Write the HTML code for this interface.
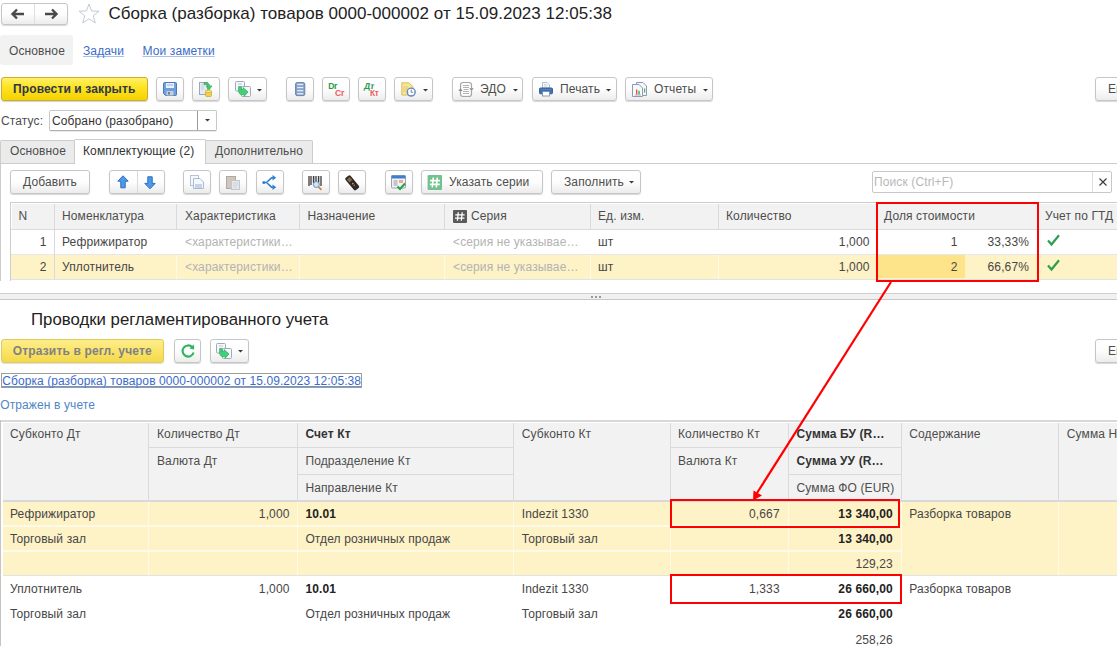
<!DOCTYPE html>
<html><head><meta charset="utf-8"><style>
*{box-sizing:border-box}
html,body{margin:0;padding:0;width:1117px;height:655px;overflow:hidden;background:#fff;position:relative}
body{font-family:"Liberation Sans",sans-serif;font-size:12px;color:#4d4d4d}
.a{position:absolute}
svg.a{overflow:visible}
.t{position:absolute;white-space:nowrap;letter-spacing:.12px}
.btn{position:absolute;border:1px solid #c6c6c6;border-radius:3px;background:linear-gradient(#fff 0%,#fdfdfd 50%,#ececec 100%);box-shadow:0 1px 1px rgba(0,0,0,.16)}
.ybtn2{position:absolute;border:1px solid #e2c95c;border-radius:3px;background:linear-gradient(#fdee8c 0%,#fbe56a 45%,#f4d94c 100%);box-shadow:0 1px 1px rgba(0,0,0,.12)}
.ybtn{position:absolute;border:1px solid #cfab2c;border-radius:3px;background:linear-gradient(#fff06a 0%,#fde424 40%,#f5d300 100%);box-shadow:0 1px 1px rgba(0,0,0,.18)}
</style></head><body>
<div class="btn" style="left:1px;top:3px;width:67px;height:22px;"></div>
<div class="a" style="left:34px;top:4px;width:1px;height:20px;background:#dedede"></div>
<svg class="a" style="left:11px;top:8px" width="14" height="12" viewBox="0 0 14 12"><path d="M6 1.5 L1.5 6 L6 10.5 M1.5 6 H13" stroke="#4a4a4a" stroke-width="2.4" fill="none"/></svg>
<svg class="a" style="left:44px;top:8px" width="14" height="12" viewBox="0 0 14 12"><path d="M8 1.5 L12.5 6 L8 10.5 M12.5 6 H1" stroke="#4a4a4a" stroke-width="2.4" fill="none"/></svg>
<svg class="a" style="left:78px;top:3px" width="22" height="21" viewBox="0 0 22 21"><path d="M11 1 L13.6 8 L21 8.2 L15.2 12.8 L17.3 20 L11 15.8 L4.7 20 L6.8 12.8 L1 8.2 L8.4 8 Z" fill="none" stroke="#c3cad6" stroke-width="1"/></svg>
<div class="t" style="top:3.68px;font-size:17px;line-height:20px;height:20px;color:#222;left:108.50px;letter-spacing:.03px">Сборка (разборка) товаров 0000-000002 от 15.09.2023 12:05:38</div>
<div class="a" style="left:0px;top:35px;width:73px;height:30px;background:#f2f2f2;border-radius:3px"></div>
<div class="t" style="top:44.03px;font-size:12px;line-height:14px;height:14px;left:9.00px;">Основное</div>
<div class="t" style="top:44.03px;font-size:12px;line-height:14px;height:14px;color:#3b6cc8;left:83.00px;text-decoration:underline;text-decoration-color:#a9c0e8;text-underline-offset:1px;text-decoration-skip-ink:none">Задачи</div>
<div class="t" style="top:44.03px;font-size:12px;line-height:14px;height:14px;color:#3b6cc8;left:142.50px;text-decoration:underline;text-decoration-color:#a9c0e8;text-underline-offset:1px;text-decoration-skip-ink:none">Мои заметки</div>
<div class="ybtn" style="left:1px;top:77px;width:147px;height:24px;"></div>
<div class="t" style="top:81.93px;font-size:12px;line-height:14px;height:14px;color:#30374a;font-weight:bold;left:13.00px;">Провести и закрыть</div>
<div class="btn" style="left:156px;top:77px;width:28px;height:24px;"></div>
<div class="btn" style="left:192px;top:77px;width:28px;height:24px;"></div>
<div class="btn" style="left:228px;top:77px;width:39px;height:24px;"></div>
<div class="btn" style="left:286px;top:77px;width:28px;height:24px;"></div>
<div class="btn" style="left:322px;top:77px;width:28px;height:24px;"></div>
<div class="btn" style="left:358px;top:77px;width:28px;height:24px;"></div>
<div class="btn" style="left:394px;top:77px;width:39px;height:24px;"></div>
<div class="btn" style="left:452px;top:77px;width:71px;height:24px;"></div>
<div class="btn" style="left:532px;top:77px;width:85px;height:24px;"></div>
<div class="btn" style="left:625px;top:77px;width:88px;height:24px;"></div>
<div class="btn" style="left:1095px;top:77px;width:45px;height:24px;"></div>
<div class="t" style="top:81.93px;font-size:12px;line-height:14px;height:14px;left:480.00px;">ЭДО</div>
<div class="t" style="top:81.93px;font-size:12px;line-height:14px;height:14px;left:560.00px;">Печать</div>
<div class="t" style="top:81.93px;font-size:12px;line-height:14px;height:14px;left:654.00px;">Отчеты</div>
<div class="t" style="top:81.93px;font-size:12px;line-height:14px;height:14px;left:1108.00px;">En</div>
<svg class="a" style="left:256.5px;top:88.5px" width="5" height="3" viewBox="0 0 5 3"><path d="M0 0 H5 L2.5 2.6Z" fill="#3a3a3a"/></svg>
<svg class="a" style="left:163px;top:82px" width="14" height="14" viewBox="0 0 14 14"><path d="M0.5 1.5 Q0.5 0.5 1.5 0.5 H12.5 Q13.5 0.5 13.5 1.5 V12.5 Q13.5 13.5 12.5 13.5 H2.5 L0.5 11.5 Z" fill="#6f9fdc" stroke="#4b78b8"/><rect x="3" y="1" width="8" height="5" fill="#e9f1fb"/><path d="M4 3 H10" stroke="#8fb2e0" stroke-width="1"/><rect x="3.5" y="9" width="7" height="4.5" fill="#c9ced6"/><rect x="5" y="10" width="2" height="2.5" fill="#6f7f96"/></svg>
<svg class="a" style="left:198px;top:81px" width="16" height="16" viewBox="0 0 16 16"><rect x="1.5" y="1.5" width="8" height="12" fill="#e6ebf2" stroke="#9aa8bc"/><path d="M3 4 H7 M3 6 H6 M3 8 H6" stroke="#b9c4d4" stroke-width=".8"/><path d="M6 1.5 Q11 1 12 5 L14 5 L11 9 L8 5 L10 5 Q9.5 3 6 3.5 Z" fill="#43c870" stroke="#2aa656" stroke-width=".6"/><rect x="7.5" y="10" width="6" height="5.5" rx="1" fill="#f0cf4a" stroke="#c9a520" stroke-width=".7"/><ellipse cx="10.5" cy="10.3" rx="3" ry="1.2" fill="#fbe784" stroke="#c9a520" stroke-width=".6"/></svg>
<svg class="a" style="left:234px;top:81px" width="17" height="17" viewBox="0 0 17 17"><rect x="1.5" y="0.5" width="9" height="9.5" rx="1" fill="#f5f7fa" stroke="#9eabbd"/><rect x="7.5" y="5.5" width="9" height="10" rx="1" fill="#f5f7fa" stroke="#9eabbd"/><path d="M4 3 H8" stroke="#b8c4d6" stroke-width="1"/><path d="M4.6 5.6 H7.2 V9 L9.3 8.3 L9 6.6 L14 11 L10.2 15.2 L10 13 L7.4 14 Q4.6 12.4 4.6 10.2 Z" fill="#42d27a" stroke="#28a655" stroke-width=".7" stroke-linejoin="round"/></svg>
<svg class="a" style="left:295px;top:82px" width="11" height="14" viewBox="0 0 11 14"><rect x="0.6" y="0.6" width="9.2" height="13" rx="1.6" fill="#86a2c8" stroke="#6883ab" stroke-width="1"/><rect x="2.2" y="1.8" width="6" height="1.3" fill="#e6eef9"/><rect x="2.2" y="4.9" width="6" height="1.3" fill="#e6eef9"/><rect x="2.2" y="8.0" width="6" height="1.3" fill="#e6eef9"/><rect x="2.2" y="11.1" width="6" height="1.3" fill="#e6eef9"/></svg>
<svg class="a" style="left:326px;top:82px" width="20" height="16" viewBox="0 0 20 16"><text x="2.2" y="7.3" font-family="Liberation Sans" font-weight="bold" font-size="8.6" fill="#2a9a48" letter-spacing="-.3">Dr</text><text x="9" y="13.7" font-family="Liberation Sans" font-weight="bold" font-size="8.6" fill="#f05a5a" letter-spacing="-.3">Cr</text></svg>
<svg class="a" style="left:363px;top:82px" width="20" height="16" viewBox="0 0 20 16"><text x="1.8" y="7.3" font-family="Liberation Sans" font-weight="bold" font-size="8.6" fill="#2a9a48" transform="skewX(-8)" letter-spacing="-.2">Дт</text><text x="7" y="13.7" font-family="Liberation Sans" font-weight="bold" font-size="8.2" fill="#f05a5a" letter-spacing="-.2">Кт</text></svg>
<svg class="a" style="left:400px;top:82px" width="18" height="16" viewBox="0 0 18 16"><path d="M1.8 0.8 H9 L12.8 4.6 V13 H1.8 Z" fill="#f9e596" stroke="#d8bd5e"/><path d="M3 5 H8 M3 7 H9 M3 9 H6" stroke="#d9c271" stroke-width=".8"/><circle cx="11.2" cy="10.1" r="4" fill="#fff" stroke="#5b8fd0" stroke-width="1.4"/><circle cx="11.2" cy="6.9" r=".6" fill="#e5703e"/><circle cx="14.4" cy="10.1" r=".6" fill="#e5703e"/><circle cx="11.2" cy="13.3" r=".6" fill="#e5563e"/><circle cx="8" cy="10.1" r=".6" fill="#e5703e"/><path d="M11.2 8 V10.3 H13" stroke="#4f7fc4" stroke-width=".9" fill="none"/></svg>
<svg class="a" style="left:422.5px;top:88.5px" width="5" height="3" viewBox="0 0 5 3"><path d="M0 0 H5 L2.5 2.6Z" fill="#3a3a3a"/></svg>
<svg class="a" style="left:458px;top:82px" width="16" height="15" viewBox="0 0 16 15"><rect x="4" y="2" width="8" height="11" fill="#fff"/><path d="M5 3.5 H11 M5 5.5 H11 M5.5 7.5 H10.5 M5 9.5 H11 M5 11.5 H11" stroke="#b3b3b3" stroke-width="1"/><path d="M2.5 7.5 V3 Q2.5 0.5 5 0.5 H11 Q13.5 0.5 13.5 3 V6.5" stroke="#a6a6a6" stroke-width="1.2" fill="none"/><path d="M13.5 9 V12 Q13.5 14.5 11 14.5 H5 Q2.5 14.5 2.5 12 V8.5" stroke="#a6a6a6" stroke-width="1.2" fill="none"/><path d="M0.3 9 L2.5 6.2 L4.7 9Z" fill="#8a8a8a"/><path d="M11.3 6.3 L13.5 9.1 L15.7 6.3Z" fill="#8a8a8a"/></svg>
<svg class="a" style="left:512.5px;top:88.5px" width="5" height="3" viewBox="0 0 5 3"><path d="M0 0 H5 L2.5 2.6Z" fill="#3a3a3a"/></svg>
<svg class="a" style="left:538px;top:81px" width="16" height="16" viewBox="0 0 16 16"><path d="M4.5 1.5 H9 L11.5 4 V7 H4.5 Z" fill="#fafbfc" stroke="#a9b6c6" stroke-width=".9"/><path d="M6 3.5 H8.5 M6 5 H9.5" stroke="#b4c0d0" stroke-width=".7"/><rect x="1.5" y="7" width="13" height="5.8" rx="1" fill="#3f6fb0" stroke="#2d5a97" stroke-width=".9"/><path d="M2.5 8.3 H13.5" stroke="#5b88c6" stroke-width=".8"/><rect x="4.5" y="10.5" width="7" height="4.5" fill="#fff" stroke="#6f8aa8" stroke-width=".8"/></svg>
<svg class="a" style="left:605.5px;top:88.5px" width="5" height="3" viewBox="0 0 5 3"><path d="M0 0 H5 L2.5 2.6Z" fill="#3a3a3a"/></svg>
<svg class="a" style="left:631px;top:81px" width="17" height="17" viewBox="0 0 17 17"><path d="M5.5 1.5 H12 L15.5 5 V14.5 H5.5 Z" fill="#f4f6f9" stroke="#8d9bb5"/><path d="M1.5 3.5 H8 L11.5 7 V15.5 H1.5 Z" fill="#f7f8fa" stroke="#8d9bb5"/><rect x="5" y="8.5" width="1.4" height="5" fill="#ef4f4f"/><rect x="7.3" y="9.8" width="1.5" height="3.7" fill="#3db85e"/><path d="M3.8 14 H10" stroke="#9a9a9a" stroke-width=".8"/><rect x="13" y="7.5" width="1.2" height="4" fill="#3db85e"/></svg>
<svg class="a" style="left:702.5px;top:88.5px" width="5" height="3" viewBox="0 0 5 3"><path d="M0 0 H5 L2.5 2.6Z" fill="#3a3a3a"/></svg>
<div class="t" style="top:114.23px;font-size:12px;line-height:14px;height:14px;left:1.00px;">Статус:</div>
<div class="a" style="left:49px;top:110px;width:168px;height:21px;border:1px solid #c8c8c8;border-bottom-color:#b0b0b0;border-radius:2px;background:#fff;box-shadow:0 1px 0 rgba(0,0,0,.08)"></div>
<div class="a" style="left:197px;top:111px;width:1px;height:19px;background:#9a9a9a"></div>
<div class="t" style="top:114.23px;font-size:12px;line-height:14px;height:14px;color:#333;left:52.00px;">Собрано (разобрано)</div>
<svg class="a" style="left:204.5px;top:119px" width="5" height="3" viewBox="0 0 5 3"><path d="M0 0 H5 L2.5 2.6Z" fill="#3a3a3a"/></svg>
<div class="a" style="left:0px;top:163px;width:1117px;height:1px;background:#cdcdcd"></div>
<div class="a" style="left:0px;top:163px;width:1px;height:118px;background:#cdcdcd"></div>
<div class="a" style="left:0px;top:140px;width:75px;height:23px;background:#ebebeb;border:1px solid #cdcdcd;border-bottom:none;border-radius:2px 2px 0 0"></div>
<div class="t" style="top:144.13px;font-size:12px;line-height:14px;height:14px;left:10.00px;">Основное</div>
<div class="a" style="left:74px;top:139px;width:132px;height:25px;background:#fff;border:1px solid #cdcdcd;border-bottom:none;border-radius:2px 2px 0 0"></div>
<div class="t" style="top:144.13px;font-size:12px;line-height:14px;height:14px;color:#333;left:83.00px;">Комплектующие (2)</div>
<div class="a" style="left:205px;top:140px;width:108px;height:23px;background:#ebebeb;border:1px solid #cdcdcd;border-bottom:none;border-radius:2px 2px 0 0"></div>
<div class="t" style="top:144.13px;font-size:12px;line-height:14px;height:14px;left:215.00px;">Дополнительно</div>
<div class="btn" style="left:10px;top:170px;width:80px;height:24px;"></div>
<div class="t" style="top:174.53px;font-size:12px;line-height:14px;height:14px;left:23.00px;">Добавить</div>
<div class="btn" style="left:109px;top:170px;width:56px;height:24px;"></div>
<div class="a" style="left:137px;top:171px;width:1px;height:22px;background:#dadada"></div>
<div class="btn" style="left:183px;top:170px;width:28px;height:24px;"></div>
<div class="btn" style="left:219px;top:170px;width:28px;height:24px;"></div>
<div class="btn" style="left:256px;top:170px;width:28px;height:24px;"></div>
<div class="btn" style="left:302px;top:170px;width:28px;height:24px;"></div>
<div class="btn" style="left:338px;top:170px;width:28px;height:24px;"></div>
<div class="btn" style="left:385px;top:170px;width:28px;height:24px;"></div>
<div class="btn" style="left:421px;top:170px;width:122px;height:24px;"></div>
<div class="t" style="top:174.53px;font-size:12px;line-height:14px;height:14px;left:449.00px;">Указать серии</div>
<div class="btn" style="left:551px;top:170px;width:90px;height:24px;"></div>
<div class="t" style="top:174.53px;font-size:12px;line-height:14px;height:14px;left:564.00px;">Заполнить</div>
<svg class="a" style="left:629px;top:181px" width="5" height="3" viewBox="0 0 5 3"><path d="M0 0 H5 L2.5 2.6Z" fill="#3a3a3a"/></svg>
<div class="a" style="left:872px;top:171px;width:240px;height:22px;border:1px solid #c8c8c8;border-radius:2px;background:#fff"></div>
<div class="a" style="left:1092px;top:172px;width:1px;height:20px;background:#dddddd"></div>
<div class="t" style="top:174.53px;font-size:12px;line-height:14px;height:14px;color:#b8b8b8;left:874.00px;">Поиск (Ctrl+F)</div>
<div class="a" style="left:10px;top:202px;width:1107px;height:79px;border:1px solid #cdcdcd;border-right:none;border-bottom:none"></div>
<div class="a" style="left:11px;top:203px;width:1106px;height:1px;background:#ffffff"></div>
<div class="a" style="left:12px;top:204px;width:1105px;height:25px;background:#f2f2f2"></div>
<div class="a" style="left:11px;top:229px;width:1106px;height:1px;background:#dadada"></div>
<div class="a" style="left:11px;top:254px;width:1106px;height:1px;background:#e6e7ec"></div>
<div class="a" style="left:11px;top:255px;width:1106px;height:24px;background:#fef2c7"></div>
<div class="a" style="left:11px;top:279px;width:1106px;height:1px;background:#e3e3e3"></div>
<div class="a" style="left:54px;top:204px;width:1px;height:25px;background:#dadada"></div>
<div class="a" style="left:54px;top:230px;width:1px;height:49px;background:#d9d9d9"></div>
<div class="a" style="left:176px;top:204px;width:1px;height:25px;background:#dadada"></div>
<div class="a" style="left:176px;top:255px;width:1px;height:24px;background:#fff9e8"></div>
<div class="a" style="left:299px;top:204px;width:1px;height:25px;background:#dadada"></div>
<div class="a" style="left:299px;top:255px;width:1px;height:24px;background:#fff9e8"></div>
<div class="a" style="left:444px;top:204px;width:1px;height:25px;background:#dadada"></div>
<div class="a" style="left:444px;top:255px;width:1px;height:24px;background:#fff9e8"></div>
<div class="a" style="left:590px;top:204px;width:1px;height:25px;background:#dadada"></div>
<div class="a" style="left:590px;top:255px;width:1px;height:24px;background:#fff9e8"></div>
<div class="a" style="left:718px;top:204px;width:1px;height:25px;background:#dadada"></div>
<div class="a" style="left:718px;top:255px;width:1px;height:24px;background:#fff9e8"></div>
<div class="a" style="left:877px;top:204px;width:1px;height:25px;background:#dadada"></div>
<div class="a" style="left:877px;top:255px;width:1px;height:24px;background:#fff9e8"></div>
<div class="a" style="left:1038px;top:204px;width:1px;height:25px;background:#dadada"></div>
<div class="a" style="left:1038px;top:255px;width:1px;height:24px;background:#fff9e8"></div>
<div class="a" style="left:878px;top:255px;width:87px;height:23px;background:#fde48a"></div>
<div class="t" style="top:208.83px;font-size:12px;line-height:14px;height:14px;left:18.50px;">N</div>
<div class="t" style="top:208.83px;font-size:12px;line-height:14px;height:14px;left:62.00px;">Номенклатура</div>
<div class="t" style="top:208.83px;font-size:12px;line-height:14px;height:14px;left:185.00px;">Характеристика</div>
<div class="t" style="top:208.83px;font-size:12px;line-height:14px;height:14px;left:307.50px;">Назначение</div>
<div class="t" style="top:208.83px;font-size:12px;line-height:14px;height:14px;left:471.00px;">Серия</div>
<div class="t" style="top:208.83px;font-size:12px;line-height:14px;height:14px;left:598.00px;">Ед. изм.</div>
<div class="t" style="top:208.83px;font-size:12px;line-height:14px;height:14px;left:726.00px;">Количество</div>
<div class="t" style="top:208.83px;font-size:12px;line-height:14px;height:14px;left:884.00px;">Доля стоимости</div>
<div class="t" style="top:208.83px;font-size:12px;line-height:14px;height:14px;left:1045.00px;">Учет по ГТД</div>
<div class="t" style="top:235.03px;font-size:12px;line-height:14px;height:14px;color:#464646;right:1070.50px;text-align:right;">1</div>
<div class="t" style="top:235.03px;font-size:12px;line-height:14px;height:14px;color:#464646;left:62.00px;">Рефрижиратор</div>
<div class="t" style="top:235.03px;font-size:12px;line-height:14px;height:14px;color:#b3b3b3;left:185.00px;">&lt;характеристики…</div>
<div class="t" style="top:235.03px;font-size:12px;line-height:14px;height:14px;color:#b3b3b3;left:453.00px;">&lt;серия не указывае…</div>
<div class="t" style="top:235.03px;font-size:12px;line-height:14px;height:14px;color:#464646;left:598.00px;">шт</div>
<div class="t" style="top:235.03px;font-size:12px;line-height:14px;height:14px;color:#464646;right:247.50px;text-align:right;">1,000</div>
<div class="t" style="top:260.13px;font-size:12px;line-height:14px;height:14px;color:#464646;right:1070.50px;text-align:right;">2</div>
<div class="t" style="top:260.13px;font-size:12px;line-height:14px;height:14px;color:#464646;left:62.00px;">Уплотнитель</div>
<div class="t" style="top:260.13px;font-size:12px;line-height:14px;height:14px;color:#b3b3b3;left:185.00px;">&lt;характеристики…</div>
<div class="t" style="top:260.13px;font-size:12px;line-height:14px;height:14px;color:#b3b3b3;left:453.00px;">&lt;серия не указывае…</div>
<div class="t" style="top:260.13px;font-size:12px;line-height:14px;height:14px;color:#464646;left:598.00px;">шт</div>
<div class="t" style="top:260.13px;font-size:12px;line-height:14px;height:14px;color:#464646;right:247.50px;text-align:right;">1,000</div>
<div class="t" style="top:235.03px;font-size:12px;line-height:14px;height:14px;color:#464646;right:159.50px;text-align:right;">1</div>
<div class="t" style="top:235.03px;font-size:12px;line-height:14px;height:14px;color:#464646;right:88.00px;text-align:right;">33,33%</div>
<div class="t" style="top:260.13px;font-size:12px;line-height:14px;height:14px;color:#464646;right:159.50px;text-align:right;">2</div>
<div class="t" style="top:260.13px;font-size:12px;line-height:14px;height:14px;color:#464646;right:88.00px;text-align:right;">66,67%</div>
<div class="a" style="left:0px;top:293px;width:1117px;height:1px;background:#d0d0d0"></div>
<div class="a" style="left:0px;top:294px;width:1117px;height:5px;background:#f0f0f0"></div>
<div class="a" style="left:0px;top:299px;width:1117px;height:1px;background:#c8c8c8"></div>
<div class="t" style="top:309.75px;font-size:16.8px;line-height:19px;height:19px;color:#222;left:31.00px;letter-spacing:0">Проводки регламентированного учета</div>
<div class="ybtn2" style="left:1px;top:339px;width:163px;height:24px;"></div>
<div class="t" style="top:343.73px;font-size:12px;line-height:14px;height:14px;color:#7f8088;font-weight:bold;left:12.80px;letter-spacing:.15px">Отразить в регл. учете</div>
<div class="btn" style="left:174px;top:339px;width:27px;height:24px;"></div>
<div class="btn" style="left:210px;top:339px;width:39px;height:24px;"></div>
<svg class="a" style="left:238px;top:350px" width="5" height="3" viewBox="0 0 5 3"><path d="M0 0 H5 L2.5 2.6Z" fill="#3a3a3a"/></svg>
<div class="btn" style="left:1095px;top:339px;width:45px;height:24px;"></div>
<div class="t" style="top:343.73px;font-size:12px;line-height:14px;height:14px;left:1108.00px;">En</div>
<div class="a" style="left:1px;top:373px;width:361px;height:15px;border:1px solid #9c9c9c"></div>
<div class="t" style="top:373.63px;font-size:12px;line-height:14px;height:14px;color:#3b6cc8;left:2.20px;letter-spacing:.08px">Сборка (разборка) товаров 0000-000002 от 15.09.2023 12:05:38</div>
<div class="a" style="left:2px;top:386px;width:359px;height:1px;background:#6f95d6"></div>
<div class="t" style="top:398.03px;font-size:12px;line-height:14px;height:14px;color:#4f86c6;left:0.20px;">Отражен в учете</div>
<div class="a" style="left:0px;top:420px;width:1117px;height:2px;background:#d8d8d8"></div>
<div class="a" style="left:0px;top:420px;width:1px;height:226px;background:#c4c4c4"></div>
<div class="a" style="left:3px;top:423px;width:1114px;height:77px;background:#f2f2f2"></div>
<div class="a" style="left:3px;top:500px;width:1114px;height:2px;background:#d9d9d9"></div>
<div class="a" style="left:3px;top:502px;width:1114px;height:73px;background:#fef2c7"></div>
<div class="a" style="left:3px;top:575px;width:1114px;height:1px;background:#e3e3e3"></div>
<div class="a" style="left:148px;top:423px;width:1px;height:77px;background:#dadada"></div>
<div class="a" style="left:148px;top:502px;width:1px;height:73px;background:#fff9e8"></div>
<div class="a" style="left:297px;top:423px;width:1px;height:77px;background:#dadada"></div>
<div class="a" style="left:297px;top:502px;width:1px;height:73px;background:#fff9e8"></div>
<div class="a" style="left:513px;top:423px;width:1px;height:77px;background:#dadada"></div>
<div class="a" style="left:513px;top:502px;width:1px;height:73px;background:#fff9e8"></div>
<div class="a" style="left:670px;top:423px;width:1px;height:77px;background:#dadada"></div>
<div class="a" style="left:670px;top:502px;width:1px;height:73px;background:#fff9e8"></div>
<div class="a" style="left:788px;top:423px;width:1px;height:77px;background:#dadada"></div>
<div class="a" style="left:788px;top:502px;width:1px;height:73px;background:#fff9e8"></div>
<div class="a" style="left:901px;top:423px;width:1px;height:77px;background:#dadada"></div>
<div class="a" style="left:901px;top:502px;width:1px;height:73px;background:#fff9e8"></div>
<div class="a" style="left:1058px;top:423px;width:1px;height:77px;background:#dadada"></div>
<div class="a" style="left:1058px;top:502px;width:1px;height:73px;background:#fff9e8"></div>
<div class="a" style="left:149px;top:447px;width:148px;height:1px;background:#dadada"></div>
<div class="a" style="left:298px;top:447px;width:215px;height:1px;background:#dadada"></div>
<div class="a" style="left:298px;top:474px;width:215px;height:1px;background:#dadada"></div>
<div class="a" style="left:671px;top:447px;width:117px;height:1px;background:#dadada"></div>
<div class="a" style="left:789px;top:447px;width:112px;height:1px;background:#dadada"></div>
<div class="a" style="left:789px;top:474px;width:112px;height:1px;background:#dadada"></div>
<div class="a" style="left:3px;top:525px;width:898px;height:2px;background:#fff9e8"></div>
<div class="a" style="left:3px;top:550px;width:898px;height:2px;background:#fff9e8"></div>
<div class="t" style="top:427.03px;font-size:12px;line-height:14px;height:14px;left:10.00px;">Субконто Дт</div>
<div class="t" style="top:427.03px;font-size:12px;line-height:14px;height:14px;left:157.00px;">Количество Дт</div>
<div class="t" style="top:453.73px;font-size:12px;line-height:14px;height:14px;left:157.00px;">Валюта Дт</div>
<div class="t" style="top:427.03px;font-size:12px;line-height:14px;height:14px;color:#333;font-weight:bold;left:305.40px;">Счет Кт</div>
<div class="t" style="top:453.73px;font-size:12px;line-height:14px;height:14px;left:305.40px;">Подразделение Кт</div>
<div class="t" style="top:480.63px;font-size:12px;line-height:14px;height:14px;left:305.40px;">Направление Кт</div>
<div class="t" style="top:427.03px;font-size:12px;line-height:14px;height:14px;left:521.70px;">Субконто Кт</div>
<div class="t" style="top:427.03px;font-size:12px;line-height:14px;height:14px;left:678.00px;">Количество Кт</div>
<div class="t" style="top:453.73px;font-size:12px;line-height:14px;height:14px;left:678.00px;">Валюта Кт</div>
<div class="t" style="top:427.03px;font-size:12px;line-height:14px;height:14px;color:#333;font-weight:bold;left:796.50px;">Сумма БУ (R…</div>
<div class="t" style="top:453.73px;font-size:12px;line-height:14px;height:14px;color:#333;font-weight:bold;left:796.50px;">Сумма УУ (R…</div>
<div class="t" style="top:480.63px;font-size:12px;line-height:14px;height:14px;left:796.50px;">Сумма ФО (EUR)</div>
<div class="t" style="top:427.03px;font-size:12px;line-height:14px;height:14px;left:909.30px;">Содержание</div>
<div class="t" style="top:427.03px;font-size:12px;line-height:14px;height:14px;left:1066.80px;">Сумма НУ</div>
<div class="t" style="top:506.63px;font-size:12px;line-height:14px;height:14px;color:#464646;left:10.00px;">Рефрижиратор</div>
<div class="t" style="top:506.63px;font-size:12px;line-height:14px;height:14px;color:#464646;right:827.50px;text-align:right;">1,000</div>
<div class="t" style="top:506.63px;font-size:12px;line-height:14px;height:14px;color:#222;font-weight:bold;left:305.40px;">10.01</div>
<div class="t" style="top:506.63px;font-size:12px;line-height:14px;height:14px;color:#464646;left:521.70px;">Indezit 1330</div>
<div class="t" style="top:506.63px;font-size:12px;line-height:14px;height:14px;color:#464646;right:337.30px;text-align:right;">0,667</div>
<div class="t" style="top:506.63px;font-size:12px;line-height:14px;height:14px;color:#222;font-weight:bold;right:224.20px;text-align:right;">13 340,00</div>
<div class="t" style="top:506.63px;font-size:12px;line-height:14px;height:14px;color:#464646;left:909.30px;">Разборка товаров</div>
<div class="t" style="top:531.63px;font-size:12px;line-height:14px;height:14px;color:#464646;left:10.00px;">Торговый зал</div>
<div class="t" style="top:531.63px;font-size:12px;line-height:14px;height:14px;color:#464646;left:305.40px;">Отдел розничных продаж</div>
<div class="t" style="top:531.63px;font-size:12px;line-height:14px;height:14px;color:#464646;left:521.70px;">Торговый зал</div>
<div class="t" style="top:531.63px;font-size:12px;line-height:14px;height:14px;color:#222;font-weight:bold;right:224.20px;text-align:right;">13 340,00</div>
<div class="t" style="top:556.63px;font-size:12px;line-height:14px;height:14px;color:#464646;right:224.20px;text-align:right;">129,23</div>
<div class="t" style="top:582.13px;font-size:12px;line-height:14px;height:14px;color:#464646;left:10.00px;">Уплотнитель</div>
<div class="t" style="top:582.13px;font-size:12px;line-height:14px;height:14px;color:#464646;right:827.50px;text-align:right;">1,000</div>
<div class="t" style="top:582.13px;font-size:12px;line-height:14px;height:14px;color:#222;font-weight:bold;left:305.40px;">10.01</div>
<div class="t" style="top:582.13px;font-size:12px;line-height:14px;height:14px;color:#464646;left:521.70px;">Indezit 1330</div>
<div class="t" style="top:582.13px;font-size:12px;line-height:14px;height:14px;color:#464646;right:337.30px;text-align:right;">1,333</div>
<div class="t" style="top:582.13px;font-size:12px;line-height:14px;height:14px;color:#222;font-weight:bold;right:224.20px;text-align:right;">26 660,00</div>
<div class="t" style="top:582.13px;font-size:12px;line-height:14px;height:14px;color:#464646;left:909.30px;">Разборка товаров</div>
<div class="t" style="top:607.33px;font-size:12px;line-height:14px;height:14px;color:#464646;left:10.00px;">Торговый зал</div>
<div class="t" style="top:607.33px;font-size:12px;line-height:14px;height:14px;color:#464646;left:305.40px;">Отдел розничных продаж</div>
<div class="t" style="top:607.33px;font-size:12px;line-height:14px;height:14px;color:#464646;left:521.70px;">Торговый зал</div>
<div class="t" style="top:607.33px;font-size:12px;line-height:14px;height:14px;color:#222;font-weight:bold;right:224.20px;text-align:right;">26 660,00</div>
<div class="t" style="top:632.53px;font-size:12px;line-height:14px;height:14px;color:#464646;right:224.20px;text-align:right;">258,26</div>
<svg class="a" style="left:117px;top:175px" width="12" height="14" viewBox="0 0 12 14"><path d="M6 0.8 L11.2 6.2 L8.2 6.2 L8.2 12.8 L3.8 12.8 L3.8 6.2 L0.8 6.2 Z" fill="#4d9be8" stroke="#2b6cc0" stroke-width="1" stroke-linejoin="round"/></svg>
<svg class="a" style="left:144px;top:176px" width="12" height="14" viewBox="0 0 12 14"><path d="M6 12.8 L11.2 7.4 L8.2 7.4 L8.2 0.8 L3.8 0.8 L3.8 7.4 L0.8 7.4 Z" fill="#4d9be8" stroke="#2b6cc0" stroke-width="1" stroke-linejoin="round"/></svg>
<svg class="a" style="left:190px;top:175px" width="14" height="14" viewBox="0 0 14 14"><rect x="0.5" y="0.5" width="8" height="10" fill="#f4f7fb" stroke="#b3c3da"/><path d="M3.5 3.5 H10 L13.5 7 V13.5 H3.5 Z" fill="#f4f7fb" stroke="#a9bbd6"/><rect x="5" y="9" width="7" height="4" fill="#c4d3e6"/></svg>
<svg class="a" style="left:226px;top:175px" width="14" height="15" viewBox="0 0 14 15"><rect x="0.5" y="1.5" width="9" height="12" fill="#cfc6bd" stroke="#b3a89c"/><rect x="5.5" y="5.5" width="8" height="9" fill="#e3e6ea" stroke="#c2c7ce"/><path d="M7 8 H12 M7 10 H12 M7 12 H11" stroke="#cdd2d8" stroke-width=".8"/></svg>
<svg class="a" style="left:262px;top:175px" width="15" height="15" viewBox="0 0 15 15"><path d="M1.5 7.5 H4.5 L9.5 2.8 H11.5 M4.5 7.5 L9.5 12.2 H11.5" stroke="#2e7fd6" stroke-width="1.6" fill="none" stroke-linejoin="round"/><path d="M10.5 0 L14.2 2.8 L10.5 5.6Z M10.5 9.4 L14.2 12.2 L10.5 15Z" fill="#2e7fd6"/><circle cx="1.8" cy="7.5" r="1.5" fill="#2e7fd6"/></svg>
<svg class="a" style="left:308px;top:175px" width="16" height="16" viewBox="0 0 16 16"><path d="M1 1 V11 M3 1 V10 M5.5 1 V8 M8 1 V7 M10.5 1 V7 M13 1 V11" stroke="#3b3b3b" stroke-width="1.3"/><path d="M2 1 V10 M6.8 1 V7 M12 1 V10" stroke="#7a7a7a" stroke-width=".6"/><circle cx="8.3" cy="9.5" r="3" fill="#cfe5fa" stroke="#6f8fb5" stroke-width="1"/><path d="M10.5 11.8 L13.5 14.8" stroke="#c88a3a" stroke-width="1.8"/></svg>
<svg class="a" style="left:345px;top:176px" width="14" height="14" viewBox="0 0 14 14"><g transform="rotate(-40 7 7)"><rect x="4" y="-1" width="6.5" height="16" rx="1.6" fill="#2a2a2a"/><rect x="5.3" y="1" width="3.8" height="4" fill="#8a6a3a"/><circle cx="7.2" cy="8" r=".8" fill="#e59b3a"/><circle cx="7.2" cy="10.2" r=".8" fill="#9a7a4a"/></g></svg>
<svg class="a" style="left:391px;top:175px" width="16" height="16" viewBox="0 0 16 16"><rect x="0.5" y="0.5" width="14" height="12.5" rx="1" fill="#f2f2f2" stroke="#9aa4b0"/><rect x="0.5" y="0.5" width="14" height="3" fill="#3f7fd0"/><rect x="2.5" y="5" width="4" height="6" fill="#c5c5c5"/><rect x="8" y="5" width="4" height="3" fill="#f1a3a3"/><path d="M6.5 11.5 L9 14 L14 8.5" stroke="#22a34a" stroke-width="2" fill="none"/></svg>
<svg class="a" style="left:427px;top:175px" width="16" height="15" viewBox="0 0 16 15"><rect x="0.6" y="0" width="14.4" height="15" rx="1" fill="#72c290"/><path d="M6.3 2.5 L5.3 12.5 M10.3 2.5 L9.3 12.5 M3 5.6 H13 M2.8 9.4 H12.8" stroke="#fff" stroke-width="1.6"/></svg>
<svg class="a" style="left:1099px;top:178px" width="8" height="8" viewBox="0 0 8 8"><path d="M0.5 0.5 L7.5 7.5 M7.5 0.5 L0.5 7.5" stroke="#3a3a3a" stroke-width="1.15"/></svg>
<svg class="a" style="left:453px;top:210px" width="14" height="13" viewBox="0 0 14 13"><rect x="0" y="0" width="14" height="13" rx="1" fill="#5a5a5a"/><path d="M5.3 2.2 L4.4 10.8 M9.2 2.2 L8.3 10.8 M2.3 4.8 H11.7 M2 8.2 H11.4" stroke="#fff" stroke-width="1.3"/></svg>
<svg class="a" style="left:1047px;top:234px" width="13" height="12" viewBox="0 0 13 12"><path d="M1 6.5 L4.5 10.5 L12 1.2" stroke="#2e9e4f" stroke-width="2.2" fill="none"/></svg>
<svg class="a" style="left:1047px;top:259px" width="13" height="12" viewBox="0 0 13 12"><path d="M1 6.5 L4.5 10.5 L12 1.2" stroke="#2e9e4f" stroke-width="2.2" fill="none"/></svg>
<div class="a" style="left:591px;top:296px;width:2px;height:2px;background:#9a9a9a"></div>
<div class="a" style="left:595px;top:296px;width:2px;height:2px;background:#9a9a9a"></div>
<div class="a" style="left:599px;top:296px;width:2px;height:2px;background:#9a9a9a"></div>
<svg class="a" style="left:180px;top:343px" width="16" height="16" viewBox="0 0 16 16"><path d="M12.3 4.2 A5.6 5.6 0 1 0 13.6 9.5" stroke="#2fb25e" stroke-width="2.1" fill="none"/><path d="M9.4 5.6 L14.2 6.4 L13.9 1.4 Z" fill="#2fb25e"/></svg>
<svg class="a" style="left:215px;top:343px" width="17" height="17" viewBox="0 0 17 17"><rect x="1.5" y="0.5" width="9" height="9.5" rx="1" fill="#f5f7fa" stroke="#9eabbd"/><rect x="7.5" y="5.5" width="9" height="10" rx="1" fill="#f5f7fa" stroke="#9eabbd"/><path d="M4 3 H8" stroke="#b8c4d6" stroke-width="1"/><path d="M4.6 5.6 H7.2 V9 L9.3 8.3 L9 6.6 L14 11 L10.2 15.2 L10 13 L7.4 14 Q4.6 12.4 4.6 10.2 Z" fill="#42d27a" stroke="#28a655" stroke-width=".7" stroke-linejoin="round"/></svg>
<div class="a" style="left:876px;top:202px;width:163px;height:80px;border:2px solid #f00"></div>
<div class="a" style="left:670px;top:499px;width:230px;height:29px;border:2px solid #f00"></div>
<div class="a" style="left:670px;top:574px;width:232px;height:30px;border:2px solid #f00"></div>
<svg class="a" style="left:0px;top:0px" width="1117" height="655" viewBox="0 0 1117 655"><line x1="891" y1="282" x2="757" y2="493" stroke="#f00" stroke-width="2.2"/><path d="M753 500.5 L753.5 490.5 L762 495.5 Z" fill="#f00"/></svg>
</body></html>
